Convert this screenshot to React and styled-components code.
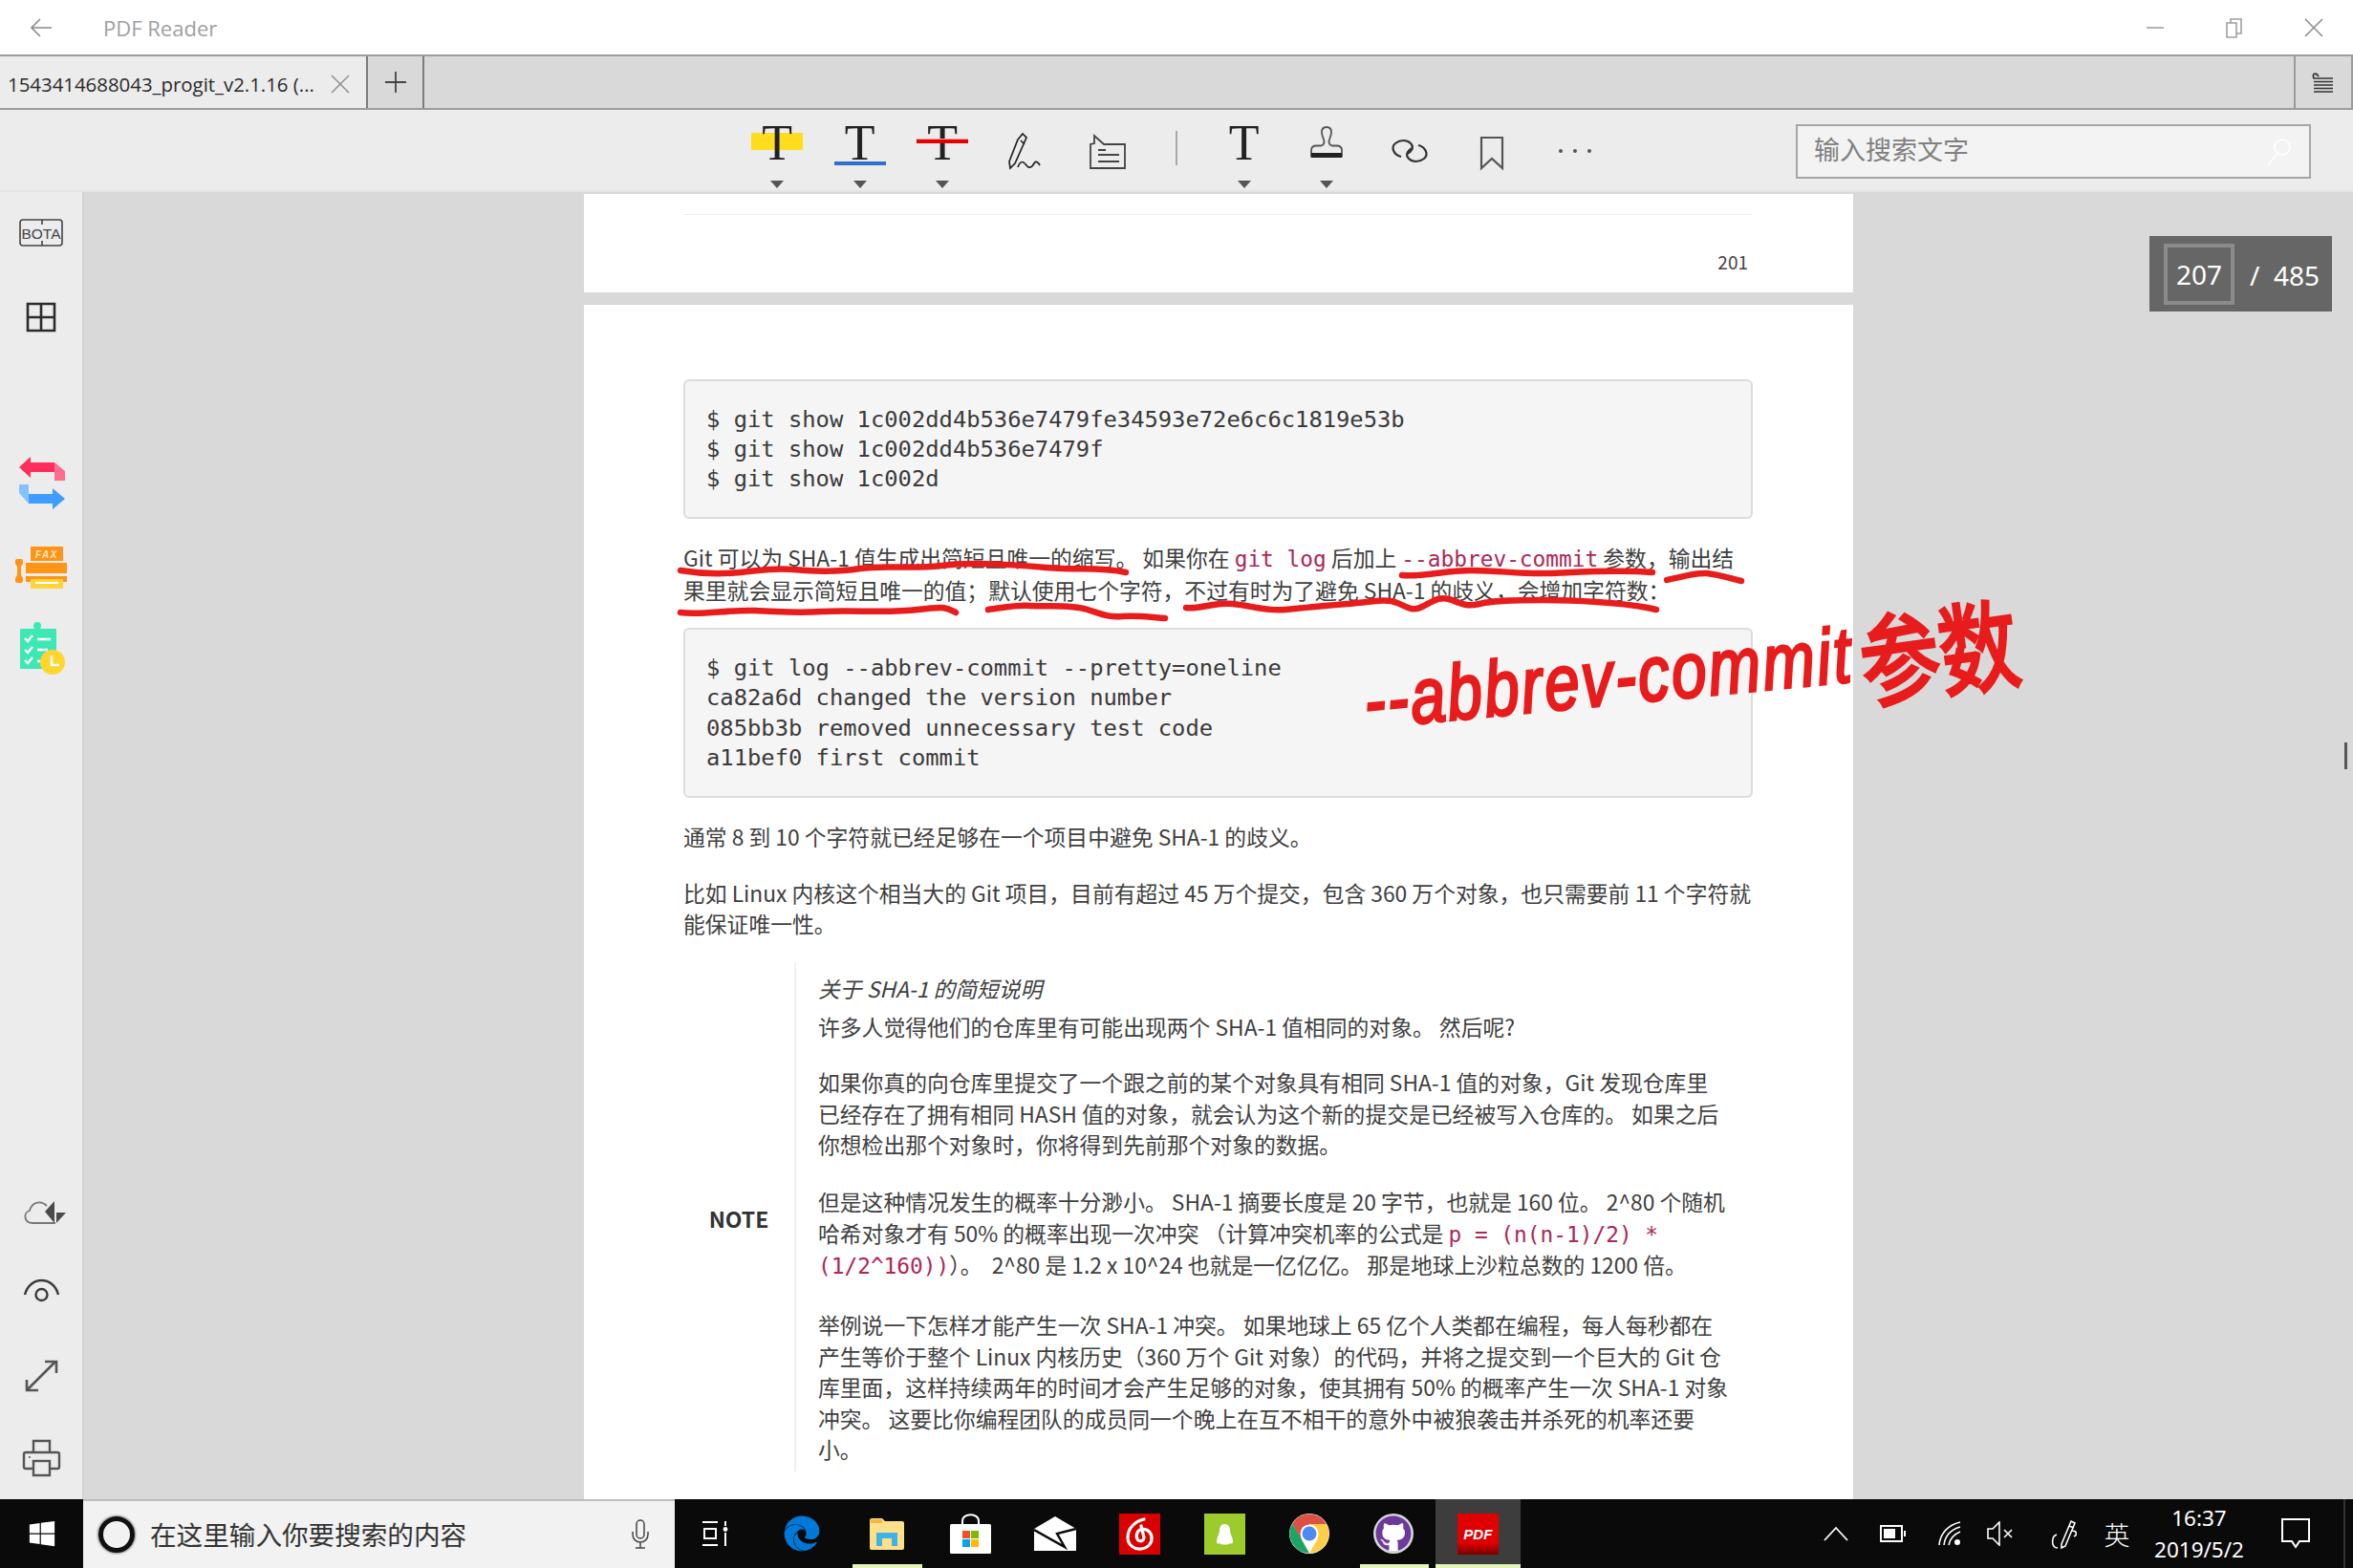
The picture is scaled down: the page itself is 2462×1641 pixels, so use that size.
import React from 'react'
import styled, { createGlobalStyle } from 'styled-components'
import { FaEdge, FaWindows, FaGithub } from 'react-icons/fa'

const CJK = '"Noto Sans CJK SC", "Noto Sans", sans-serif'
const UI = '"Open Sans", "Noto Sans CJK SC", sans-serif'
const MONO = '"DejaVu Sans Mono", "Liberation Mono", monospace'

// full-width punctuation used by the page text
const C = '\uFF0C'
const S = '\uFF1B'
const K = '\uFF1A'
const LP = '\uFF08'
const RP = '\uFF09'

const GlobalStyle = createGlobalStyle`
  html, body {
    margin: 0;
    padding: 0;
    background: #d9d9d9;
  }
  * {
    box-sizing: border-box;
  }
`

const Window = styled.div`
  width: 2462px;
  height: 1641px;
  display: flex;
  flex-direction: column;
  overflow: hidden;
  font-family: ${UI};
`

/* title bar */
const TitleBar = styled.div`
  height: 57px;
  flex: none;
  display: flex;
  align-items: center;
  background: #fff;
`

const BackButton = styled.div`
  width: 108px;
  padding-left: 31px;
  display: flex;
  align-items: center;
`

const AppName = styled.div`
  font-size: 22px;
  color: #a0a0a0;
  flex: 1;
`

const WinControls = styled.div`
  display: flex;
`

const WinControl = styled.div`
  width: 83px;
  height: 57px;
  display: flex;
  align-items: center;
  justify-content: center;
`

/* tabs */
const TabBar = styled.div`
  height: 58px;
  flex: none;
  display: flex;
  background: #d9d9d9;
  border-top: 2px solid #9c9c9c;
  border-bottom: 2px solid #9c9c9c;
  border-right: 2px solid #9c9c9c;
`

const Tab = styled.div`
  width: 385px;
  background: #ececec;
  border-right: 2px solid #7c7c7c;
  display: flex;
  align-items: center;
  justify-content: space-between;
  padding: 3px 17px 0 8px;
  font-size: 20.4px;
  color: #2a2a2a;
  white-space: nowrap;
`

const AddTab = styled.div`
  width: 59px;
  border-right: 2px solid #7c7c7c;
  display: flex;
  align-items: center;
  justify-content: center;
`

const TabMenu = styled.div`
  margin-left: auto;
  width: 60px;
  border-left: 2px solid #9c9c9c;
  display: flex;
  align-items: center;
  justify-content: center;
`

/* toolbar */
const Toolbar = styled.div`
  height: 86px;
  flex: none;
  display: flex;
  align-items: flex-start;
  padding: 0 44px 0 770px;
  background: #ececec;
  border-bottom: 2px solid #e4e4e4;
`

const ToolButton = styled.div`
  width: 86.5px;
  height: 84px;
  padding-top: 10px;
  display: flex;
  flex-direction: column;
  align-items: center;
`

const IconSlot = styled.div`
  position: relative;
  width: 60px;
  height: 56px;
  display: flex;
  justify-content: center;
`

const Caret = styled.div`
  margin-top: 8px;
  width: 0;
  height: 0;
  border-left: 7px solid transparent;
  border-right: 7px solid transparent;
  border-top: 8px solid #555;
`

const LetterT = styled.span`
  position: relative;
  font-family: "Liberation Serif", serif;
  font-size: 52px;
  line-height: 50px;
  color: #222;
`

const Highlight = styled.div`
  position: absolute;
  left: 3px;
  top: 14px;
  width: 54px;
  height: 18px;
  background: #ffdc1e;
`

const UnderMark = styled.div`
  position: absolute;
  left: 3px;
  top: ${(p) => p.$top}px;
  width: 54px;
  height: 4px;
  background: ${(p) => p.$color};
  box-shadow: ${(p) => p.$glow || 'none'};
`

const ToolSep = styled.div`
  width: 56px;
  height: 84px;
  padding-top: 22px;
  display: flex;
  justify-content: center;

  &::before {
    content: '';
    width: 2px;
    height: 36px;
    background: #a8a8a8;
  }
`

const SearchBox = styled.div`
  margin-left: auto;
  margin-top: 15px;
  width: 539px;
  height: 57px;
  border: 2px solid #a6a6a6;
  background: #f3f3f3;
  display: flex;
  align-items: center;
  justify-content: space-between;
  padding: 0 18px 0 17px;
  font-family: ${CJK};
  font-size: 27px;
  color: #808080;
`

const SearchHintText = styled.span`
  margin-top: -6px;
`

/* main area */
const Main = styled.div`
  height: 1368px;
  flex: none;
  display: flex;
  overflow: hidden;
`

const Rail = styled.div`
  width: 88px;
  flex: none;
  background: #ececec;
  border-right: 2px solid #d2d2d2;
  display: flex;
  flex-direction: column;
  justify-content: space-between;
`

const RailGroup = styled.div`
  display: flex;
  flex-direction: column;
`

const RailItem = styled.div`
  width: 87px;
  height: 87px;
`

const Viewer = styled.div`
  position: relative;
  flex: 1;
  background: #d9d9d9;
  padding: 2px 0 0 523px;
`

const Pages = styled.div`
  width: 1328px;
  display: flex;
  flex-direction: column;
  gap: 13px;
`

const TailPage = styled.div`
  height: 103px;
  background: #fff;
  padding: 21px 105px 0 104px;
`

const HeaderRule = styled.div`
  height: 1px;
  background: #ececec;
`

const PageNo = styled.div`
  margin-top: 35px;
  text-align: right;
  font-family: ${CJK};
  font-size: 19px;
  line-height: 28px;
  color: #444;
  padding-right: 5px;
`

const Page = styled.div`
  background: #fff;
  height: 1400px;
  padding: 78px 105px 0 104px;
  font-family: ${CJK};
  font-size: 22.8px;
  line-height: 32.6px;
  color: #404040;
`

const CodeBox = styled.pre`
  margin: ${(p) => p.$mt || 0}px 0 0;
  padding: 24.5px 0 23px 22px;
  border: 2px solid #dcdcdc;
  border-radius: 6px;
  background: #f5f5f5;
  font-family: ${MONO};
  font-size: 23.8px;
  line-height: 31.4px;
  color: #3a3a3a;
`

const Para = styled.div`
  margin-top: ${(p) => p.$mt}px;
`

const Line = styled.div`
  white-space: pre;
`

const Code = styled.span`
  font-family: ${MONO};
  font-size: 22.8px;
  color: #ad2757;
`

const Note = styled.div`
  margin-top: 24px;
  display: flex;
`

const NoteLabel = styled.div`
  width: 116px;
  flex: none;
  display: flex;
  align-items: center;
  justify-content: center;
  padding-top: 2px;
  font-weight: 700;
  font-size: 23px;
  color: #333;
`

const NoteBody = styled.div`
  flex: 1;
  height: 532px;
  border-left: 2px solid #eeeeee;
  padding: 11px 0 0 23px;
`

const NoteTitle = styled.div`
  font-style: italic;
`

const InkLayer = styled.svg`
  position: absolute;
  left: -88px;
  top: -201px;
  pointer-events: none;
`

const HandLatin = styled.div`
  position: absolute;
  left: 1344px;
  top: 483px;
  font-family: "Liberation Sans", sans-serif;
  font-style: italic;
  font-size: 82px;
  line-height: 100px;
  letter-spacing: 3px;
  color: #e81c1c;
  -webkit-text-stroke: 3px #e81c1c;
  white-space: nowrap;
  transform-origin: left bottom;
  transform: rotate(-5.5deg) scaleX(0.8);
`

const HandCjk = styled.div`
  position: absolute;
  left: 1858px;
  top: 428px;
  font-family: ${CJK};
  font-size: 83px;
  line-height: 120px;
  color: #e81c1c;
  -webkit-text-stroke: 3px #e81c1c;
  white-space: nowrap;
  transform-origin: left center;
  transform: rotate(-8deg) scaleY(1.25);
`

const PageBadge = styled.div`
  position: absolute;
  left: 2161px;
  top: 46px;
  width: 191px;
  height: 79px;
  background: #666;
  display: flex;
  align-items: center;
  padding-left: 15px;
  color: #fff;
  font-size: 28px;
  font-family: "Noto Sans", sans-serif;
`

const PageInput = styled.div`
  width: 74px;
  height: 64px;
  border: 4px solid #8b8b8b;
  display: flex;
  align-items: center;
  justify-content: center;
  margin-right: 16px;
`

const PageTotal = styled.div`
  white-space: pre;
  margin-top: 2px;
`

const ScrollThumb = styled.div`
  position: absolute;
  left: 2365px;
  top: 576px;
  width: 3px;
  height: 28px;
  background: #555;
`

/* taskbar */
const Taskbar = styled.div`
  height: 72px;
  flex: none;
  display: flex;
  background: #0a0a0a;
  color: #fff;
  position: relative;
`

const StartButton = styled.div`
  width: 87px;
  display: flex;
  align-items: center;
  padding-left: 29px;
`

const TaskSearch = styled.div`
  width: 619px;
  background: #f2f2f2;
  border-top: 2px solid #bdbdbd;
  display: flex;
  align-items: center;
  padding: 0 26px 0 16px;
  font-family: ${CJK};
  font-size: 27.6px;
  color: #333;
`

const Cortana = styled.div`
  width: 38px;
  height: 38px;
  border-radius: 50%;
  border: 5px solid #111;
  box-shadow: 0 0 2px 1px #888;
  margin-right: 16px;
`

const SearchHint = styled.div`
  flex: 1;
  margin-top: -2px;
`

const TaskView = styled.div`
  width: 89px;
  display: flex;
  align-items: center;
  justify-content: center;
  padding-right: 6px;
`

const TaskApp = styled.div`
  position: relative;
  width: 88.4px;
  display: flex;
  align-items: center;
  justify-content: center;
  background: ${(p) => (p.$active ? '#3d3d3d' : 'transparent')};

  &::after {
    content: '';
    display: ${(p) => (p.$open ? 'block' : 'none')};
    position: absolute;
    left: ${(p) => (p.$active ? 0 : 9)}px;
    right: ${(p) => (p.$active ? 0 : 7)}px;
    bottom: 0;
    height: 4px;
    background: #e4f5ba;
  }
`

const PdfTile = styled.div`
  width: 43px;
  height: 43px;
  background: linear-gradient(#e00000 70%, #7a0000);
  display: flex;
  align-items: center;
  justify-content: center;
  font-family: "Liberation Sans", sans-serif;
  font-style: italic;
  font-weight: 700;
  font-size: 15px;
  color: #fff;
`

const Tray = styled.div`
  position: absolute;
  right: 0;
  top: 0;
  bottom: 0;
  width: 571px;
  display: flex;
  align-items: center;
  border-right: 8px solid #0a0a0a;
`

const DesktopEdge = styled.div`
  position: absolute;
  right: 8px;
  top: 0;
  bottom: 0;
  width: 2px;
  background: #333;
`

const TrayIcon = styled.div`
  width: ${(p) => p.$w}px;
  flex: none;
  display: flex;
  align-items: center;
  justify-content: center;
`

const Ime = styled.div`
  width: 28px;
  flex: none;
  text-align: center;
  font-family: ${CJK};
  font-size: 27px;
  font-weight: 300;
`

const Clock = styled.div`
  width: 144px;
  flex: none;
  text-align: center;
  font-family: "Noto Sans", sans-serif;
  font-size: 22.5px;
  line-height: 33px;
`

const Stroke = ({ w = 60, h = 56, sw = 2, color = '#444', children }) => (
  <svg width={w} height={h} viewBox={`0 0 ${w} ${h}`} fill="none" stroke={color} strokeWidth={sw}>
    {children}
  </svg>
)

const RailIcon = ({ children, sw = 2.4, color = '#555' }) => (
  <RailItem>
    <Stroke w={87} h={87} sw={sw} color={color}>{children}</Stroke>
  </RailItem>
)

const underlines = [
  'M712 597 C730 600 755 601 775 599 S810 594 830 596 S875 599 900 595 S950 596 985 592 S1060 591 1095 594 S1150 593 1178 599',
  'M1467 602 C1490 604 1510 597 1540 597 S1590 601 1620 600 S1690 596 1729 599',
  'M1744 607 C1760 604 1775 599 1786 600 S1810 605 1822 608',
  'M712 641 C735 644 760 638 790 639 S830 642 860 640 S930 642 960 638 S990 636 1000 641',
  'M1034 638 C1050 636 1062 633 1078 634 S1120 632 1138 638 S1160 646 1175 645 S1205 646 1219 647',
  'M1241 636 C1255 638 1270 630 1290 632 S1325 640 1345 638 S1385 634 1410 632 S1450 626 1462 631 S1478 640 1488 635 S1505 624 1516 627 S1532 636 1548 632 S1590 628 1615 628 S1700 630 1733 638',
]

const App = () => (
  <Window>
    <GlobalStyle />
    <TitleBar>
      <BackButton>
        <Stroke w={24} h={24} sw={1.6} color="#8a8a8a">
          <path d="M23 12 H2 M11 3 L2 12 L11 21" />
        </Stroke>
      </BackButton>
      <AppName>PDF Reader</AppName>
      <WinControls>
        <WinControl>
          <Stroke w={20} h={20} sw={1.6} color="#a0a0a0"><path d="M1 10 H19" /></Stroke>
        </WinControl>
        <WinControl>
          <Stroke w={20} h={22} sw={1.6} color="#a0a0a0">
            <path d="M2 6 H12 V21 H2 Z M6 6 V2 H17 V17 H12" />
          </Stroke>
        </WinControl>
        <WinControl>
          <Stroke w={20} h={20} sw={1.5} color="#8a8a8a"><path d="M1 1 L19 19 M19 1 L1 19" /></Stroke>
        </WinControl>
      </WinControls>
    </TitleBar>

    <TabBar>
      <Tab>
        <span>1543414688043_progit_v2.1.16 (...</span>
        <Stroke w={20} h={20} sw={1.4} color="#8a8a8a"><path d="M1 1 L19 19 M19 1 L1 19" /></Stroke>
      </Tab>
      <AddTab>
        <Stroke w={22} h={22} sw={1.8} color="#444"><path d="M0 11 H22 M11 0 V22" /></Stroke>
      </AddTab>
      <TabMenu>
        <Stroke w={24} h={22} sw={1.7} color="#333">
          <path d="M7 5 C4 0 0 2 2 7 H22 M2 10.5 H22 M2 14 H22 M2 17.5 H22 M2 21 H22" />
        </Stroke>
      </TabMenu>
    </TabBar>

    <Toolbar>
      <ToolButton>
        <IconSlot>
          <Highlight />
          <LetterT>T</LetterT>
        </IconSlot>
        <Caret />
      </ToolButton>
      <ToolButton>
        <IconSlot>
          <LetterT>T</LetterT>
          <UnderMark $top={44} $color="#2f6fd0" />
        </IconSlot>
        <Caret />
      </ToolButton>
      <ToolButton>
        <IconSlot>
          <LetterT>T</LetterT>
          <UnderMark $top={21} $color="#e60000" $glow="0 -1px 0 #f2a6a6" />
        </IconSlot>
        <Caret />
      </ToolButton>
      <ToolButton>
        <IconSlot>
          <Stroke sw={1.7} color="#222">
            <path d="M22 21 L27 15 L31 19 L19 46 L14 51 L13 44 Z M25 22 L29 26" />
            <path d="M22 50 C25 42 28 44 31 48 S37 50 39 46 S44 46 45 48" />
          </Stroke>
        </IconSlot>
      </ToolButton>
      <ToolButton>
        <IconSlot>
          <Stroke sw={1.8} color="#444">
            <path d="M12 51 V26 L16 25 V17 L26 26 H48 V51 Z M20 32 H28 M20 37 H42 M20 44 H42" />
          </Stroke>
        </IconSlot>
      </ToolButton>
      <ToolSep />
      <ToolButton>
        <IconSlot>
          <LetterT>T</LetterT>
        </IconSlot>
        <Caret />
      </ToolButton>
      <ToolButton>
        <IconSlot>
          <Stroke sw={1.8} color="#555">
            <path d="M30 8 c-3.5 0-5 2.5-5 5.5 c0 4 2.5 7 2.5 10 c0 2-.5 3-3 4 h-5 c-4 0-5.5 2-5.5 5 v6 h32 v-6 c0-3-1.5-5-5.5-5 h-5 c-2.5-1-3-2-3-4 c0-3 2.5-6 2.5-10 c0-3-1.5-5.5-5-5.5z" />
            <rect x="14" y="35" width="32" height="5" fill="#222" stroke="none" />
          </Stroke>
        </IconSlot>
        <Caret />
      </ToolButton>
      <ToolButton>
        <IconSlot>
          <Stroke sw={2.2} color="#333">
            <path d="M21 39 C13 37 10 29 15 25 S27 21 31 25 S32 34 27 36" />
            <path d="M39 27 C47 29 50 37 45 41 S33 45 29 41 S28 32 33 30" />
          </Stroke>
        </IconSlot>
      </ToolButton>
      <ToolButton>
        <IconSlot>
          <Stroke sw={2.2} color="#555"><path d="M19 19 H41 V51 L30 41 L19 51 Z" /></Stroke>
        </IconSlot>
      </ToolButton>
      <ToolButton>
        <IconSlot>
          <Stroke color="none">
            <circle cx="15" cy="33" r="2" fill="#555" />
            <circle cx="30" cy="33" r="2" fill="#555" />
            <circle cx="45" cy="33" r="2" fill="#555" />
          </Stroke>
        </IconSlot>
      </ToolButton>
      <SearchBox>
        <SearchHintText>输入搜索文字</SearchHintText>
        <Stroke w={26} h={32} sw={1.6} color="#fff">
          <circle cx="16" cy="11" r="8" />
          <path d="M11 17 L1 30" />
        </Stroke>
      </SearchBox>
    </Toolbar>

    <Main>
      <Rail>
        <RailGroup>
          <RailIcon sw={1.6} color="#444">
            <rect x="21" y="29" width="44" height="27" rx="3" />
            <path d="M44 29 V34 M44 51 V56" />
            <text x="43" y="49" textAnchor="middle" fontFamily="Liberation Sans, sans-serif" fontSize="15.5" fill="#444" stroke="none">BOTA</text>
          </RailIcon>
          <RailIcon sw={2.6} color="#2b2b2b">
            <path d="M29 30 H57 V58 H29 Z M43 30 V58 M29 44 H57" />
          </RailIcon>
          <RailItem />
          <RailIcon color="none">
            <path d="M20 27 L32 16 V22 H57 V32 H32 V38 Z" fill="#ff2e5b" />
            <path d="M57 22 L68 31 V41 H57 Z" fill="#ff6c8d" />
            <path d="M68 60 L55 49 V55 H30 V65 H55 V71 Z" fill="#3e9dff" />
            <path d="M20 45 H30 V65 L20 54 Z" fill="#84c2ff" />
          </RailIcon>
          <RailIcon color="none">
            <rect x="32" y="23" width="34" height="15" fill="#ff9416" />
            <text x="49" y="35" textAnchor="middle" fontFamily="Liberation Sans, sans-serif" fontStyle="italic" fontWeight="700" fontSize="10" letterSpacing="1.5" fill="#ffe7c2">FAX</text>
            <rect x="27" y="40" width="43" height="11" fill="#ff9416" />
            <rect x="27" y="54" width="43" height="6" fill="#ff9416" />
            <rect x="32" y="57" width="34" height="10" fill="#ffd43b" />
            <rect x="37" y="60" width="24" height="2" fill="#fff" />
            <path d="M16 38 Q16 36 18 36 H22 Q24 36 24 38 V41 L22 44 V53 L24 56 V59 Q24 61 22 61 H18 Q16 61 16 59 V56 L18 53 V44 L16 41 Z" fill="#ff9416" />
          </RailIcon>
          <RailIcon color="none">
            <rect x="21" y="22" width="38" height="42" rx="1" fill="#3ee8b5" />
            <circle cx="39" cy="19" r="4" fill="#3ee8b5" />
            <path d="M26 32 L29 35 L34 29 M26 44 L29 47 L34 41 M26 55 L29 58 L34 52 M39 33 H53 M39 44 H50 M39 56 H44" stroke="#fff" strokeWidth="2.4" />
            <circle cx="55" cy="57" r="13" fill="#ffd52e" />
            <path d="M54 50 V60 H62" stroke="#fff" strokeWidth="2.6" />
          </RailIcon>
        </RailGroup>
        <RailGroup>
          <RailIcon sw={1.8} color="#777">
            <path d="M58 59 H34 C25 59 24 48 31 46 C33 38 42 34 49 41" />
            <path d="M47 47 L57 36 V59 Z M59 48 H69 L59 59 Z" fill="#4a4a4a" stroke="none" />
          </RailIcon>
          <RailIcon sw={2.4} color="#3a3a3a">
            <path d="M26 47 C31 27 56 27 61 47" />
            <circle cx="43.5" cy="47" r="6" />
          </RailIcon>
          <RailIcon sw={2.6}>
            <path d="M29 59 L58 30 M47 30 H59 V42 M28 49 V60 H40" />
          </RailIcon>
          <RailIcon sw={2.4}>
            <path d="M35 38 V26 H52 V38 M35 55 H27 Q25 55 25 53 V40 Q25 38 27 38 H60 Q62 38 62 40 V53 Q62 55 60 55 H52" />
            <rect x="35" y="47" width="17" height="15" />
            <circle cx="31" cy="43" r="1" fill="#555" stroke="none" />
          </RailIcon>
        </RailGroup>
      </Rail>

      <Viewer>
        <Pages>
          <TailPage>
            <HeaderRule />
            <PageNo>201</PageNo>
          </TailPage>
          <Page>
            <CodeBox>{`$ git show 1c002dd4b536e7479fe34593e72e6c6c1819e53b
$ git show 1c002dd4b536e7479f
$ git show 1c002d`}</CodeBox>
            <Para $mt={25.5}>
              <Line>Git 可以为 SHA-1 值生成出简短且唯一的缩写。 如果你在 <Code>git log</Code> 后加上 <Code>--abbrev-commit</Code> 参数{C}输出结</Line>
              <Line>果里就会显示简短且唯一的值{S}默认使用七个字符{C}不过有时为了避免 SHA-1 的歧义{C}会增加字符数{K}</Line>
            </Para>
            <CodeBox $mt={23}>{`$ git log --abbrev-commit --pretty=oneline
ca82a6d changed the version number
085bb3b removed unnecessary test code
a11bef0 first commit`}</CodeBox>
            <Para $mt={25.5}>
              <Line>通常 8 到 10 个字符就已经足够在一个项目中避免 SHA-1 的歧义。</Line>
            </Para>
            <Para $mt={26}>
              <Line>比如 Linux 内核这个相当大的 Git 项目{C}目前有超过 45 万个提交{C}包含 360 万个对象{C}也只需要前 11 个字符就</Line>
              <Line>能保证唯一性。</Line>
            </Para>
            <Note>
              <NoteLabel>NOTE</NoteLabel>
              <NoteBody>
                <NoteTitle>关于 SHA-1 的简短说明</NoteTitle>
                <Para $mt={8}>
                  <Line>许多人觉得他们的仓库里有可能出现两个 SHA-1 值相同的对象。 然后呢?</Line>
                </Para>
                <Para $mt={25}>
                  <Line>如果你真的向仓库里提交了一个跟之前的某个对象具有相同 SHA-1 值的对象{C}Git 发现仓库里</Line>
                  <Line>已经存在了拥有相同 HASH 值的对象{C}就会认为这个新的提交是已经被写入仓库的。 如果之后</Line>
                  <Line>你想检出那个对象时{C}你将得到先前那个对象的数据。</Line>
                </Para>
                <Para $mt={27.5}>
                  <Line>但是这种情况发生的概率十分渺小。 SHA-1 摘要长度是 20 字节{C}也就是 160 位。 2^80 个随机</Line>
                  <Line>哈希对象才有 50% 的概率出现一次冲突 {LP}计算冲突机率的公式是 <Code>p = (n(n-1)/2) *</Code></Line>
                  <Line><Code>(1/2^160))</Code>{RP}。  2^80 是 1.2 x 10^24 也就是一亿亿亿。 那是地球上沙粒总数的 1200 倍。</Line>
                </Para>
                <Para $mt={29}>
                  <Line>举例说一下怎样才能产生一次 SHA-1 冲突。 如果地球上 65 亿个人类都在编程{C}每人每秒都在</Line>
                  <Line>产生等价于整个 Linux 内核历史{LP}360 万个 Git 对象{RP}的代码{C}并将之提交到一个巨大的 Git 仓</Line>
                  <Line>库里面{C}这样持续两年的时间才会产生足够的对象{C}使其拥有 50% 的概率产生一次 SHA-1 对象</Line>
                  <Line>冲突。 这要比你编程团队的成员同一个晚上在互不相干的意外中被狼袭击并杀死的机率还要</Line>
                  <Line>小。</Line>
                </Para>
              </NoteBody>
            </Note>
          </Page>
        </Pages>

        <InkLayer width="2462" height="1641" viewBox="0 0 2462 1641" fill="none" stroke="#e91c1c" strokeWidth="6.5" strokeLinecap="round">
          {underlines.map((d) => <path key={d} d={d} />)}
        </InkLayer>
        <HandLatin>--abbrev-commit</HandLatin>
        <HandCjk>参数</HandCjk>

        <PageBadge>
          <PageInput>207</PageInput>
          <PageTotal>/  485</PageTotal>
        </PageBadge>
        <ScrollThumb />
      </Viewer>
    </Main>

    <Taskbar>
      <StartButton>
        <FaWindows size={30} color="#fff" />
      </StartButton>
      <TaskSearch>
        <Cortana />
        <SearchHint>在这里输入你要搜索的内容</SearchHint>
        <Stroke w={20} h={32} sw={1.5} color="#444">
          <rect x="6" y="1" width="8" height="19" rx="4" />
          <path d="M2 13 V16 C2 21 6 24 10 24 S18 21 18 16 V13 M10 24 V30 M5 30 H15" />
        </Stroke>
      </TaskSearch>
      <TaskView>
        <Stroke w={28} h={28} sw={2} color="#fff">
          <path d="M1 2 H17 M1 26 H17 M3 9 H15 V19 H3 Z M25 1 V6 M25 13 V27" />
          <circle cx="25" cy="9.5" r="2.4" fill="#fff" stroke="none" />
        </Stroke>
      </TaskView>
      <TaskApp>
        <FaEdge size={38} color="#0078d7" />
      </TaskApp>
      <TaskApp $open>
        <svg width="38" height="34" viewBox="0 0 38 34">
          <path d="M1 3 Q1 1 3 1 H14 L17 4 H35 Q37 4 37 6 V32 Q37 34 35 34 H3 Q1 34 1 32 Z" fill="#ffe08a" />
          <rect x="2" y="2" width="12" height="4" fill="#f5b83d" />
          <path d="M8 30 V16 H30 V30 H24 V22 H14 V30 Z" fill="#3fb2e6" />
        </svg>
      </TaskApp>
      <TaskApp>
        <svg width="43" height="42" viewBox="0 0 43 42">
          <path d="M13 14 V8 C13 -1 30 -1 30 8 V14" fill="none" stroke="#fff" strokeWidth="2" />
          <rect x="0" y="11" width="43" height="31" rx="1.5" fill="#fff" />
          <rect x="13" y="18" width="8" height="8" fill="#f25022" />
          <rect x="22" y="18" width="8" height="8" fill="#7fba00" />
          <rect x="13" y="27" width="8" height="8" fill="#00a4ef" />
          <rect x="22" y="27" width="8" height="8" fill="#ffb900" />
        </svg>
      </TaskApp>
      <TaskApp>
        <svg width="44" height="36" viewBox="0 0 44 36">
          <path d="M0 13 L22 0 L44 13 V36 H0 Z" fill="#fff" />
          <path d="M0 14 L32 32 L24 18 L44 13" fill="none" stroke="#0a0a0a" strokeWidth="2.4" />
        </svg>
      </TaskApp>
      <TaskApp>
        <svg width="43" height="43" viewBox="0 0 43 43">
          <rect width="43" height="43" fill="#d90000" />
          <path d="M26 6 C17 8 9 15 9 25 C9 33 16 38 23 37 C31 36 35 30 34 24 C33 18 27 15 22 17 C18 19 17 25 20 28 C23 30 26 28 26 25 L23 13" fill="none" stroke="#fff" strokeWidth="3.2" strokeLinecap="round" />
        </svg>
      </TaskApp>
      <TaskApp>
        <svg width="43" height="43" viewBox="0 0 43 43">
          <rect width="43" height="43" fill="#9ccb2c" />
          <path d="M21.5 11 C17 11 16 15 16 18 C16 21 13 25 13 29 C13 32 15 32 16 31 C17 33 26 33 27 31 C28 32 30 32 30 29 C30 25 27 21 27 18 C27 15 26 11 21.5 11 Z" fill="#fff" />
        </svg>
      </TaskApp>
      <TaskApp>
        <svg width="42" height="42" viewBox="0 0 42 42">
          <circle cx="21" cy="21" r="21" fill="#fff" />
          <path d="M3.2 10.7 A20.5 20.5 0 0 1 38.8 11 H21 L12 27 Z" fill="#dd5144" />
          <path d="M3.2 10.7 L12.5 26.5 L21 41.5 A20.5 20.5 0 0 1 3.2 10.7 Z" fill="#1da462" />
          <path d="M38.8 11 A20.5 20.5 0 0 1 21 41.5 L30 26 L21 11 Z" fill="#ffcd46" />
          <circle cx="21" cy="21" r="9.5" fill="#fff" />
          <circle cx="21" cy="21" r="7.5" fill="#4c8bf5" />
        </svg>
      </TaskApp>
      <TaskApp $open>
        <svg width="42" height="42" viewBox="0 0 42 42">
          <circle cx="21" cy="21" r="21" fill="#d8d8d8" />
          <circle cx="21" cy="21" r="18" fill="#fff" />
          <foreignObject x="2" y="2" width="38" height="38">
            <FaGithub size={38} color="#6d3a9c" />
          </foreignObject>
        </svg>
      </TaskApp>
      <TaskApp $open $active>
        <PdfTile>PDF</PdfTile>
      </TaskApp>
      <Tray>
        <TrayIcon $w={60}>
          <Stroke w={26} h={16} sw={1.8} color="#fff"><path d="M1 15 L13 2 L25 15" /></Stroke>
        </TrayIcon>
        <TrayIcon $w={60}>
          <Stroke w={28} h={20} sw={2} color="#fff">
            <rect x="1" y="2" width="22" height="16" />
            <rect x="4" y="5" width="12" height="10" fill="#fff" stroke="none" />
            <path d="M26 7 V13" />
          </Stroke>
        </TrayIcon>
        <TrayIcon $w={58}>
          <Stroke w={24} h={26} sw={1.6} color="#fff">
            <path d="M1 25 C2 13 10 4 23 1 M6 25 C7 16 13 9 23 6 M11 25 C12 19 16 14 23 11" />
            <circle cx="20" cy="22" r="3" fill="#fff" stroke="none" />
          </Stroke>
        </TrayIcon>
        <TrayIcon $w={48}>
          <Stroke w={28} h={26} sw={1.6} color="#fff">
            <path d="M1 8 H6 L13 1 V25 L6 18 H1 Z M18 9 L26 17 M26 9 L18 17" />
          </Stroke>
        </TrayIcon>
        <TrayIcon $w={84}>
          <Stroke w={28} h={34} sw={1.6} color="#fff">
            <path d="M12 28 L22 4 L26 6 L16 30 L12 32 Z M20 9 L25 11" />
            <path d="M7 18 C1 20 1 32 8 32 M23 14 C28 14 29 18 25 20" />
          </Stroke>
        </TrayIcon>
        <Ime>英</Ime>
        <Clock>
          <div>16:37</div>
          <div>2019/5/2</div>
        </Clock>
        <TrayIcon $w={58}>
          <Stroke w={30} h={32} sw={2} color="#fff">
            <path d="M1 1 H29 V24 H19 L15 30 L11 24 H1 Z" />
          </Stroke>
        </TrayIcon>
      </Tray>
      <DesktopEdge />
    </Taskbar>
  </Window>
)

export default App
